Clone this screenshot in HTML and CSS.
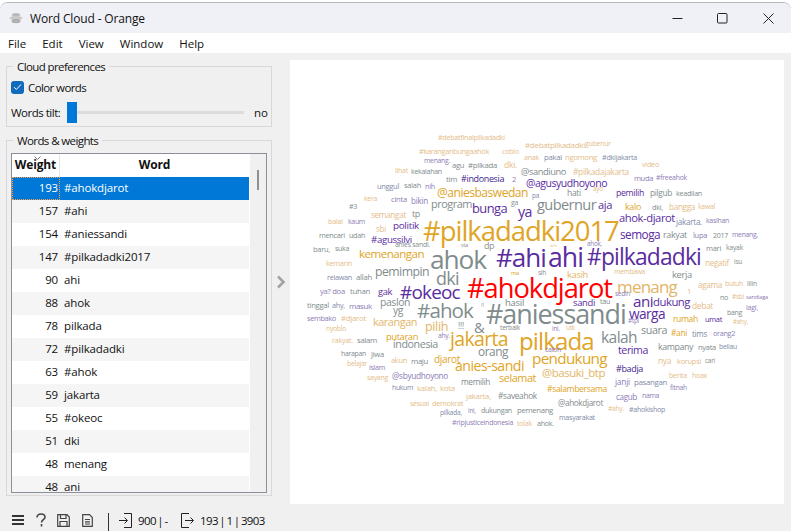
FILE: index.html
```html
<!DOCTYPE html>
<html lang="en">
<head>
    <meta charset="UTF-8">
    <meta name="viewport" content="width=device-width, initial-scale=1.0">
    <title>Word Cloud - Orange</title>
    <link rel="stylesheet" href="styles.css">
</head>
<body>
    <div class="window">
        <div class="titlebar">
            <svg class="app-icon" width="14" height="14" viewBox="0 0 14 14">
                <ellipse cx="7" cy="4" rx="4" ry="2" fill="#b9b9b9"/>
                <ellipse cx="7" cy="7" rx="6.5" ry="2" fill="#c9c9c9"/>
                <ellipse cx="7" cy="10" rx="4.5" ry="2.2" fill="#b0b0b0"/>
            </svg>
            <span class="title">Word Cloud - Orange</span>
            <div class="controls">
                <span class="control">
                    <svg width="11" height="11" viewBox="0 0 11 11"><path d="M0.5 5.5H10.5" stroke="#222" fill="none"/></svg>
                </span>
                <span class="control">
                    <svg width="11" height="11" viewBox="0 0 11 11"><rect x="0.5" y="0.5" width="9.5" height="9.5" rx="1" stroke="#222" fill="none"/></svg>
                </span>
                <span class="control">
                    <svg width="11" height="11" viewBox="0 0 11 11"><path d="M0.5 0.5L10.5 10.5M10.5 0.5L0.5 10.5" stroke="#222" fill="none"/></svg>
                </span>
            </div>
        </div>

        <div class="menubar">
            <span>File</span>
            <span>Edit</span>
            <span>View</span>
            <span>Window</span>
            <span>Help</span>
        </div>

        <div class="main">
            <div class="sidebar">
                <div class="group group-prefs">
                    <span class="group-title">Cloud preferences</span>
                    <label class="check-row">
                        <span class="checkbox">
                            <svg width="9" height="8" viewBox="0 0 9 8"><path d="M1 4.2L3.4 6.4L8 1.4" stroke="#fff" fill="none"/></svg>
                        </span>
                        Color words
                    </label>
                    <div class="slider-row">
                        <span class="slider-label">Words tilt:</span>
                        <div class="slider"><span class="slider-thumb"></span></div>
                        <span>no</span>
                    </div>
                </div>

                <div class="group group-words">
                    <span class="group-title">Words &amp; weights</span>
                    <div class="table-box">
                        <div class="table-clip">
                            <div class="table-head">
                                <div class="cell-weight head-cell">
                                    <svg class="sort-arrow" width="7" height="4" viewBox="0 0 7 4"><path d="M0.5 0.5L3.5 3.5L6.5 0.5" stroke="#777" fill="none"/></svg>
                                    Weight
                                </div>
                                <div class="cell-word head-cell">Word</div>
                            </div>
                            <div class="row selected"><div class="cell-weight"><span class="focus">193</span></div><div class="cell-word">#ahokdjarot</div></div>
                            <div class="row"><div class="cell-weight">157</div><div class="cell-word">#ahi</div></div>
                            <div class="row"><div class="cell-weight">154</div><div class="cell-word">#aniessandi</div></div>
                            <div class="row"><div class="cell-weight">147</div><div class="cell-word">#pilkadadki2017</div></div>
                            <div class="row"><div class="cell-weight">90</div><div class="cell-word">ahi</div></div>
                            <div class="row"><div class="cell-weight">88</div><div class="cell-word">ahok</div></div>
                            <div class="row"><div class="cell-weight">78</div><div class="cell-word">pilkada</div></div>
                            <div class="row"><div class="cell-weight">72</div><div class="cell-word">#pilkadadki</div></div>
                            <div class="row"><div class="cell-weight">63</div><div class="cell-word">#ahok</div></div>
                            <div class="row"><div class="cell-weight">59</div><div class="cell-word">jakarta</div></div>
                            <div class="row"><div class="cell-weight">55</div><div class="cell-word">#okeoc</div></div>
                            <div class="row"><div class="cell-weight">51</div><div class="cell-word">dki</div></div>
                            <div class="row"><div class="cell-weight">48</div><div class="cell-word">menang</div></div>
                            <div class="row"><div class="cell-weight">48</div><div class="cell-word">ani</div></div>
                        </div>
                        <div class="scrollbar"><span class="scroll-thumb"></span></div>
                    </div>
                </div>
            </div>

            <div class="splitter">
                <svg width="10" height="14" viewBox="0 0 10 14"><path d="M2 1.5L7.5 7L2 12.5" stroke="#a3a3a3" stroke-width="2.6" fill="none"/></svg>
            </div>

            <div class="cloud" id="cloud"></div>
        </div>

        <div class="statusbar">
            <svg class="icon-menu" width="12" height="10" viewBox="0 0 12 10"><path d="M0 1H12M0 5H12M0 9H12" stroke="#333" stroke-width="2" fill="none"/></svg>
            <svg class="icon-help" width="10" height="14" viewBox="0 0 10 14"><path d="M1 4.5C1 2.2 2.8 1 5 1C7.2 1 9 2.2 9 4.2C9 6.6 5.5 6.8 5.5 9.5M5.5 11V13.5" stroke="#444" stroke-width="1.6" fill="none"/></svg>
            <svg class="icon-save" width="13" height="13" viewBox="0 0 13 13"><path d="M0.7 0.7H10L12.3 3V12.3H0.7ZM3.5 0.7V4.5H9V0.7M3 12.3V7.5H10V12.3" stroke="#444" stroke-width="1.2" fill="none"/></svg>
            <svg class="icon-doc" width="11" height="13" viewBox="0 0 11 13"><path d="M0.7 0.7H7.5L10.3 3.5V12.3H0.7ZM3 5.5H8M3 7.8H8M3 10H8" stroke="#444" stroke-width="1.2" fill="none"/></svg>
            <span class="status-sep"></span>
            <svg class="icon-io" width="13" height="15" viewBox="0 0 13 15"><path d="M5 0.5H12.5V14.5H5M0 7.5H8M5.5 4.5L8.5 7.5L5.5 10.5" stroke="#222" fill="none"/></svg>
            <span class="status-text status-in">900 | -</span>
            <svg class="icon-io icon-out" width="13" height="15" viewBox="0 0 13 15"><path d="M8 0.5H0.5V14.5H8M4 7.5H12M9.5 4.5L12.5 7.5L9.5 10.5" stroke="#222" fill="none"/></svg>
            <span class="status-text">193 | 1 | 3903</span>
        </div>
    </div>

    <script src="script.js"></script>
</body>
</html>
```

FILE: styles.css
```css
* {
    box-sizing: border-box;
}

html, body {
    margin: 0;
    height: 100%;
    overflow: hidden;
    background-color: #fff;
}

body {
    padding-top: 2px;
    font-family: "Open Sans", "Noto Sans", sans-serif;
    font-size: 11.5px;
    letter-spacing: -0.15px;
    color: #111;
}

.window {
    height: 529px;
    display: flex;
    flex-direction: column;
    border-top: 1px solid #b8b8b8;
    border-radius: 8px 8px 0 0;
    overflow: hidden;
    background-color: #f0f0f0;
}

.titlebar {
    height: 30px;
    flex: none;
    display: flex;
    align-items: center;
    padding-left: 9px;
    background-color: #eff1f7;
}

.title {
    margin-left: 7px;
    font-size: 12px;
}

.controls {
    margin-left: auto;
    display: flex;
}

.control {
    width: 45.5px;
    height: 30px;
    display: flex;
    align-items: center;
    justify-content: center;
}

.menubar {
    height: 20px;
    flex: none;
    display: flex;
    align-items: center;
    gap: 16px;
    padding-left: 8px;
    letter-spacing: 0;
    background-color: #fff;
}

.main {
    flex: 1;
    min-height: 0;
    display: flex;
    padding: 7px 7px 0 6px;
}

.sidebar {
    width: 266px;
    flex: none;
    display: flex;
    flex-direction: column;
    gap: 13px;
    padding-top: 6px;
}

.group {
    position: relative;
    border: 1px solid #d8d8d8;
}

.group-title {
    position: absolute;
    top: -8px;
    left: 6px;
    padding: 0 4px;
    letter-spacing: -0.6px;
    background-color: #f0f0f0;
}

.group-prefs {
    height: 61px;
    padding: 13px 5px 0 4px;
}

.check-row {
    display: flex;
    align-items: center;
    gap: 4px;
    height: 14px;
    letter-spacing: -0.6px;
}

.checkbox {
    width: 13px;
    height: 13px;
    display: flex;
    align-items: center;
    justify-content: center;
    border-radius: 3px;
    background-color: #0f6cbd;
}

.slider-row {
    display: flex;
    align-items: center;
    margin-top: 7px;
    height: 22px;
}

.slider-label {
    width: 56px;
    flex: none;
    white-space: nowrap;
    letter-spacing: -0.5px;
}

.slider {
    position: relative;
    width: 177px;
    height: 3px;
    margin-right: 10px;
    background-color: #dcdcdc;
    flex: none;
}

.slider-thumb {
    position: absolute;
    left: 0;
    top: -9px;
    width: 10px;
    height: 21px;
    background-color: #0078d7;
}

.group-words {
    height: 356px;
    padding: 12px 4px 3px 4px;
}

.table-box {
    height: 340px;
    display: flex;
    border: 1px solid #8a8f99;
    overflow: hidden;
}

.table-clip {
    width: 237px;
    flex: none;
    background-color: #fff;
}

.table-head {
    display: flex;
    height: 23px;
    font-weight: 700;
    font-size: 12px;
}

.head-cell {
    position: relative;
    display: flex;
    align-items: center;
    justify-content: center;
    padding-bottom: 2px;
    background-color: #fff;
}

.sort-arrow {
    position: absolute;
    top: 2px;
    left: 22px;
}

.table-head .cell-weight {
    border-right: 1px solid #e4e4e4;
    padding-right: 0;
}

.row {
    display: flex;
    height: 23px;
    line-height: 21px;
}

.row:nth-child(odd) {
    background-color: #f5f5f5;
}

.row.selected {
    background-color: #0078d7;
    color: #fff;
}

.cell-weight {
    width: 48px;
    flex: none;
    text-align: right;
    padding-right: 2px;
}

.cell-word {
    flex: 1;
    padding-left: 4px;
}

.table-head .cell-word {
    padding-left: 0;
}

.focus {
    display: block;
    height: 21px;
    line-height: 19px;
    margin: 1px -1px 1px 1px;
    padding-right: 1px;
    outline: 1px dotted #ffa040;
}

.scrollbar {
    flex: 1;
    background-color: #f0f0f0;
    border-left: 1px solid #fff;
    position: relative;
}

.scroll-thumb {
    position: absolute;
    top: 16px;
    left: 7px;
    width: 2px;
    height: 20px;
    background-color: #8f8f8f;
}

.splitter {
    width: 18px;
    flex: none;
    display: flex;
    align-items: center;
    justify-content: center;
}

.cloud {
    position: relative;
    flex: 1;
    background-color: #fff;
    overflow: hidden;
}

.word {
    position: absolute;
    white-space: nowrap;
    line-height: 1;
    letter-spacing: 0;
}

.statusbar {
    height: 27px;
    flex: none;
    display: flex;
    align-items: center;
    padding: 5px 0 0 12px;
    font-size: 11.5px;
    letter-spacing: -0.6px;
    word-spacing: -1px;
}

.icon-help {
    margin-left: 12px;
}

.icon-save {
    margin-left: 11px;
}

.icon-doc {
    margin-left: 12px;
}

.status-sep {
    width: 1px;
    height: 18px;
    margin: 3px 10px 0 15px;
    background-color: #333;
}

.status-text {
    margin-left: 6px;
}

.status-in {
    width: 31px;
}

.icon-out {
    margin-left: 12px;
}
```

FILE: script.js
```js
// colour families of the cloud
const O = '#e0a526', M = '#e3b566', LO = '#e4bd8a', P = '#5a2ca0', G = '#7f8c8d', L = '#8d7db5', B = '#818ba8', R = '#ff0000', D = '#3f1f8f';

// text, left, right, vertical centre (page coordinates), colour
const words = [
    ['#debatfinalpilkadadki', 438, 505, 138, LO], ['#debatpilkadadki', 525, 585, 145, LO], ['gubenur', 585, 611, 144, LO],
    ['#karanganbungaahok', 419, 489, 152, LO], ['coblo', 502, 519, 152, LO], ['anak', 524, 539, 158, LO],
    ['pakai', 544, 562, 158, B], ['ngomong', 565, 597, 158, LO], ['#dkijakarta', 602, 637, 158, B], ['video', 642, 659, 165, LO],
    ['menang.', 424, 450, 162, L], ['agu', 452, 464, 166, G], ['#pilkada', 468, 497, 166, G], ['dki.', 504, 517, 166, LO],
    ['#pilkadajakarta', 573, 629, 173, LO], ['@sandiuno', 521, 566, 172, G], ['lihat', 395, 408, 172, LO], ['kekalahan', 411, 442, 172, G],
    ['tim', 446, 457, 180, G], ['#indonesia', 461, 504, 180, D], ['2', 512, 516, 180, L], ['muda', 634, 653, 179, L], ['#freeahok', 656, 687, 179, L],
    ['@agusyudhoyono', 526, 607, 184, P], ['ayo', 593, 603, 190, LO], ['unggul', 377, 399, 187, B], ['salah', 404, 421, 186, G], ['nih', 425, 435, 187, L],
    ['hati', 567, 581, 194, G], ['pemilih', 616, 644, 194, P], ['pilgub', 650, 672, 194, G], ['keadilan', 676, 702, 194, G],
    ['@aniesbaswedan', 437, 528, 194, O], ['pa', 532, 539, 197, B], ['ga', 511, 518, 204, G], ['kalo', 625, 641, 208, O], ['dki,', 652, 663, 208, G],
    ['bangga', 669, 695, 208, LO], ['kawal', 698, 715, 208, LO], ['kera', 364, 377, 200, LO], ['cinta', 391, 407, 200, L], ['bikin', 411, 428, 201, L], ['#3', 349, 357, 207, G],
    ['program', 431, 472, 205, G], ['bunga', 472, 507, 209, P], ['ya', 518, 532, 213, P], ['gubernur', 537, 596, 205, G], ['aja', 598, 612, 205, P],
    ['semangat', 371, 406, 216, LO], ['tp', 412, 420, 215, G], ['politik', 393, 419, 226, P],
    ['#pilkadadki2017', 423, 619, 232, O], ['ahok-djarot', 619, 675, 218, P], ['jakarta.', 676, 702, 222, B], ['kasihan', 706, 729, 222, L],
    ['semoga', 620, 660, 236, P], ['rakyat', 663, 687, 236, G], ['lupa', 693, 707, 236, L], ['2017', 713, 728, 236, G], ['menang,', 732, 758, 236, L],
    ['mari', 706, 721, 249, G], ['kayak', 726, 743, 249, G], ['negatif', 705, 729, 263, LO], ['isu', 734, 742, 263, G],
    ['#pilkadadki', 587, 701, 259, P], ['ahok,', 587, 602, 245, L], ['#ahi', 496, 546, 259, P], ['ahi', 548, 583, 259, P],
    ['ahok', 430, 486, 261, G], ['dp', 484, 494, 247, G], ['via', 461, 468, 246, G], ['deh', 550, 557, 246, LO], ['anies sandi.', 395, 430, 246, G],
    ['#agussilvi', 371, 412, 240, P], ['sbi', 376, 386, 229, LO], ['kaum', 348, 365, 222, L], ['balai', 328, 343, 222, LO], ['udah', 349, 365, 236, G],
    ['mencari', 319, 345, 236, G], ['baru,', 313, 330, 250, G], ['suka', 335, 349, 250, G], ['kemenangan', 359, 424, 254, O], ['kemarin', 326, 352, 264, LO],
    ['relawan', 327, 352, 278, B], ['allah', 356, 372, 278, G], ['pemimpin', 375, 429, 273, G], ['dki', 436, 459, 280, G], ['#ahokdjarot', 467, 612, 289, R],
    ['ya? doa', 320, 345, 292, L], ['tuhan', 350, 370, 292, G], ['gak', 378, 392, 292, P], ['#okeoc', 400, 460, 294, P],
    ['tinggal', 307, 329, 306, G], ['ahy,', 332, 345, 306, B], ['masuk', 349, 372, 306, L], ['paslon', 380, 410, 303, G], ['yg', 393, 403, 311, G],
    ['#ahok', 417, 473, 311, G], ['!!', 481, 484, 305, G], ['hasil', 505, 524, 303, G], ['#aniessandi', 486, 626, 316, G],
    ['sembako', 307, 336, 319, L], ['#djarot', 341, 366, 319, LO], ['karangan', 373, 417, 323, M], ['pilih', 425, 448, 328, M], ['!!!', 458, 464, 327, G],
    ['&', 474, 484, 328, G], ['terbaik', 500, 520, 329, G], ['ini.', 552, 560, 329, L], ['utk', 566, 575, 329, LO], ['nyoblo', 326, 346, 330, LO],
    ['rakyat.', 332, 353, 341, LO], ['salam', 357, 377, 341, G], ['putaran', 386, 418, 337, O], ['ahy.', 438, 450, 337, L], ['indonesia', 393, 438, 345, G],
    ['jakarta', 450, 508, 340, O], ['pilkada', 519, 594, 342, O], ['orang', 478, 508, 353, G], ['kalah', 601, 637, 339, G], ['terima', 618, 648, 351, P], ['calon', 545, 561, 351, L],
    ['suara', 641, 667, 331, G], ['#ani', 671, 687, 334, O], ['tims', 692, 707, 334, B], ['orang2', 713, 735, 334, L], ['kampany', 658, 693, 348, G],
    ['nyata', 698, 716, 348, G], ['beliau', 719, 737, 348, B], ['nya', 658, 671, 362, LO], ['korupsi', 677, 701, 362, LO], ['cari', 705, 715, 362, G],
    ['berita', 669, 687, 376, LO], ['hoax', 692, 707, 376, LO], ['fitnah', 670, 687, 389, L], ['pasangan', 634, 667, 383, B], ['janji', 615, 630, 383, L],
    ['#badja', 616, 643, 369, D], ['cagub', 616, 637, 397, L], ['nama', 642, 659, 397, L], ['@ahokdjarot', 558, 603, 404, G], ['#ahy.', 608, 624, 410, LO],
    ['#ahokishop', 629, 665, 410, B], ['masyarakat', 559, 595, 418, B], ['tolak', 517, 532, 424, LO], ['ahok.', 537, 554, 424, G], ['#ripjusticeindonesia', 452, 513, 424, L],
    ['pilkada,', 440, 462, 414, B], ['sesuai', 410, 429, 404, LO], ['demokrat', 432, 463, 404, LO], ['ini,', 468, 476, 411, L], ['dukungan', 481, 512, 411, G], ['pemenang', 517, 553, 411, G],
    ['jakarta,', 466, 491, 397, LO], ['#saveahok', 498, 537, 397, G], ['hukum', 392, 413, 389, B], ['kalah,', 417, 437, 389, LO], ['kota', 440, 455, 389, LO], ['memilih', 461, 490, 383, G],
    ['selamat', 499, 536, 379, O], ['#salambersama', 547, 607, 390, O], ['@basuki_btp', 542, 605, 373, M], ['pendukung', 532, 607, 359, O], ['anies-sandi', 455, 524, 367, O], ['djarot', 434, 460, 360, O],
    ['akun', 391, 407, 361, LO], ['maju', 411, 428, 362, G], ['harapan', 341, 366, 355, G], ['jiwa', 371, 384, 355, G], ['belajar', 347, 367, 365, LO], ['islam', 369, 385, 368, L],
    ['sayang', 367, 388, 378, LO], ['@sbyudhoyono', 392, 448, 377, L], ['menang', 617, 677, 287, M], ['kerja', 672, 692, 275, G], ['membawa', 614, 645, 273, LO], ['kasih', 567, 588, 275, M],
    ['sih', 538, 546, 274, G], ['ma', 511, 519, 274, O], ['agama', 698, 722, 286, LO], ['butuh', 725, 743, 285, LO], ['lilin', 747, 757, 285, G], ['1', 687, 691, 292, LO],
    ['no', 720, 728, 298, G], ['#sbi', 732, 744, 298, LO], ['sandiaga', 746, 768, 298, L], ['sedih', 615, 630, 295, L], ['ani', 633, 653, 302, P], ['dukung', 653, 690, 302, P],
    ['sandi', 573, 595, 303, P], ['tau', 600, 610, 302, G], ['debat', 692, 713, 307, LO], ['lagi,', 746, 758, 309, L], ['bang', 727, 742, 313, G], ['warga', 629, 665, 315, P],
    ['rumah', 673, 698, 320, O], ['umat', 705, 722, 320, P], ['#ahy,', 733, 748, 322, LO], ['#tpi', 628, 639, 322, L]
];

const cloud = document.getElementById('cloud');
const originX = 290, originY = 60;

words.forEach(function (w) {
    const el = document.createElement('span');
    el.className = 'word';
    el.textContent = w[0];
    el.style.color = w[4];
    el.style.fontSize = '100px';
    cloud.appendChild(el);

    // font size comes from the width the word takes in the cloud,
    // a little larger and tightened since Open Sans runs wide
    const target = w[2] - w[1];
    const size = 108 * target / el.offsetWidth;
    el.style.fontSize = size.toFixed(2) + 'px';
    el.style.letterSpacing = (-0.08 * target / w[0].length).toFixed(2) + 'px';
    el.style.left = (w[1] - originX) + 'px';
    el.style.top = (w[3] - originY - size * 0.56).toFixed(1) + 'px';
});
```
